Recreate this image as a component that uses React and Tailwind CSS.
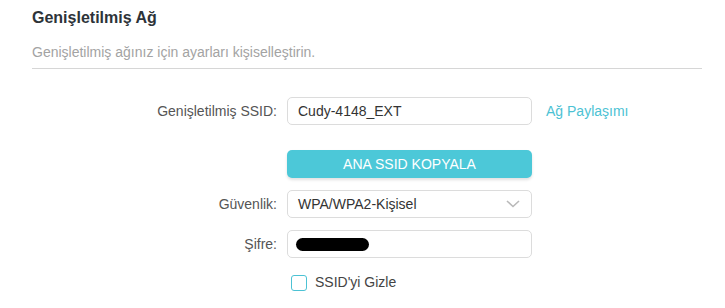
import React, { useState } from 'react';

function Row({ label, children, extra }) {
  return (
    <div className="flex items-center">
      <label className="w-[255px] pr-[10px] text-right text-[14px] text-[#555]">{label}</label>
      <div className="w-[245px]">{children}</div>
      {extra}
    </div>
  );
}

export default function App() {
  const [hidden, setHidden] = useState(false);

  return (
    <div className="w-[725px] h-[308px] bg-white px-[32px] pt-[8px] font-['Liberation_Sans',Arial,sans-serif] overflow-hidden">
      {/* Header */}
      <h1 className="text-[16px] leading-[20px] font-bold text-[#2d3339]">Genişletilmiş Ağ</h1>
      <p className="mt-[16px] text-[14px] leading-[16px] text-[#a3a3a3]">
        Genişletilmiş ağınız için ayarları kişiselleştirin.
      </p>
      <div className="mt-[8px] w-[670px] border-t border-[#d6d6d6]" />

      {/* Form */}
      <div className="mt-[28px] flex flex-col">
        <Row
          label="Genişletilmiş SSID:"
          extra={<span className="ml-[14px] text-[14px] text-[#4cc2d4]">Ağ Paylaşımı</span>}
        >
          <div className="h-[28px] rounded-[5px] border border-[#dcdcdc] px-[10px] flex items-center text-[14px] text-[#333]">
            Cudy-4148_EXT
          </div>
        </Row>

        <div className="mt-[25px] flex">
          <div className="w-[255px]" />
          <button className="w-[245px] h-[28px] rounded-[5px] bg-[#4cc8d8] text-white text-[14px] shadow-[0_2px_3px_rgba(0,0,0,0.12)]">
            ANA SSID KOPYALA
          </button>
        </div>

        <div className="mt-[12px]">
          <Row label="Güvenlik:">
            <div className="h-[28px] rounded-[5px] border border-[#dcdcdc] pl-[10px] pr-[11px] flex items-center justify-between text-[14px] text-[#333]">
              <span>WPA/WPA2-Kişisel</span>
              <svg width="14" height="8" viewBox="0 0 14 8" fill="none">
                <path d="M1 1l6 5.5L13 1" stroke="#b9b9b9" strokeWidth="1.6" />
              </svg>
            </div>
          </Row>
        </div>

        <div className="mt-[12px]">
          <Row label="Şifre:">
            <div className="h-[28px] rounded-[5px] border border-[#dcdcdc] px-[8px] flex items-center">
              <div className="w-[73px] h-[13px] rounded-full bg-black" />
            </div>
          </Row>
        </div>

        <div className="mt-[14px] flex items-center">
          <div className="w-[259px]" />
          <button
            onClick={() => setHidden(!hidden)}
            className="w-[16px] h-[16px] rounded-[3px] border border-[#4cc2d4] bg-white"
          />
          <span className="ml-[8px] text-[14px] text-[#444]">SSID'yi Gizle</span>
        </div>
      </div>
    </div>
  );
}
